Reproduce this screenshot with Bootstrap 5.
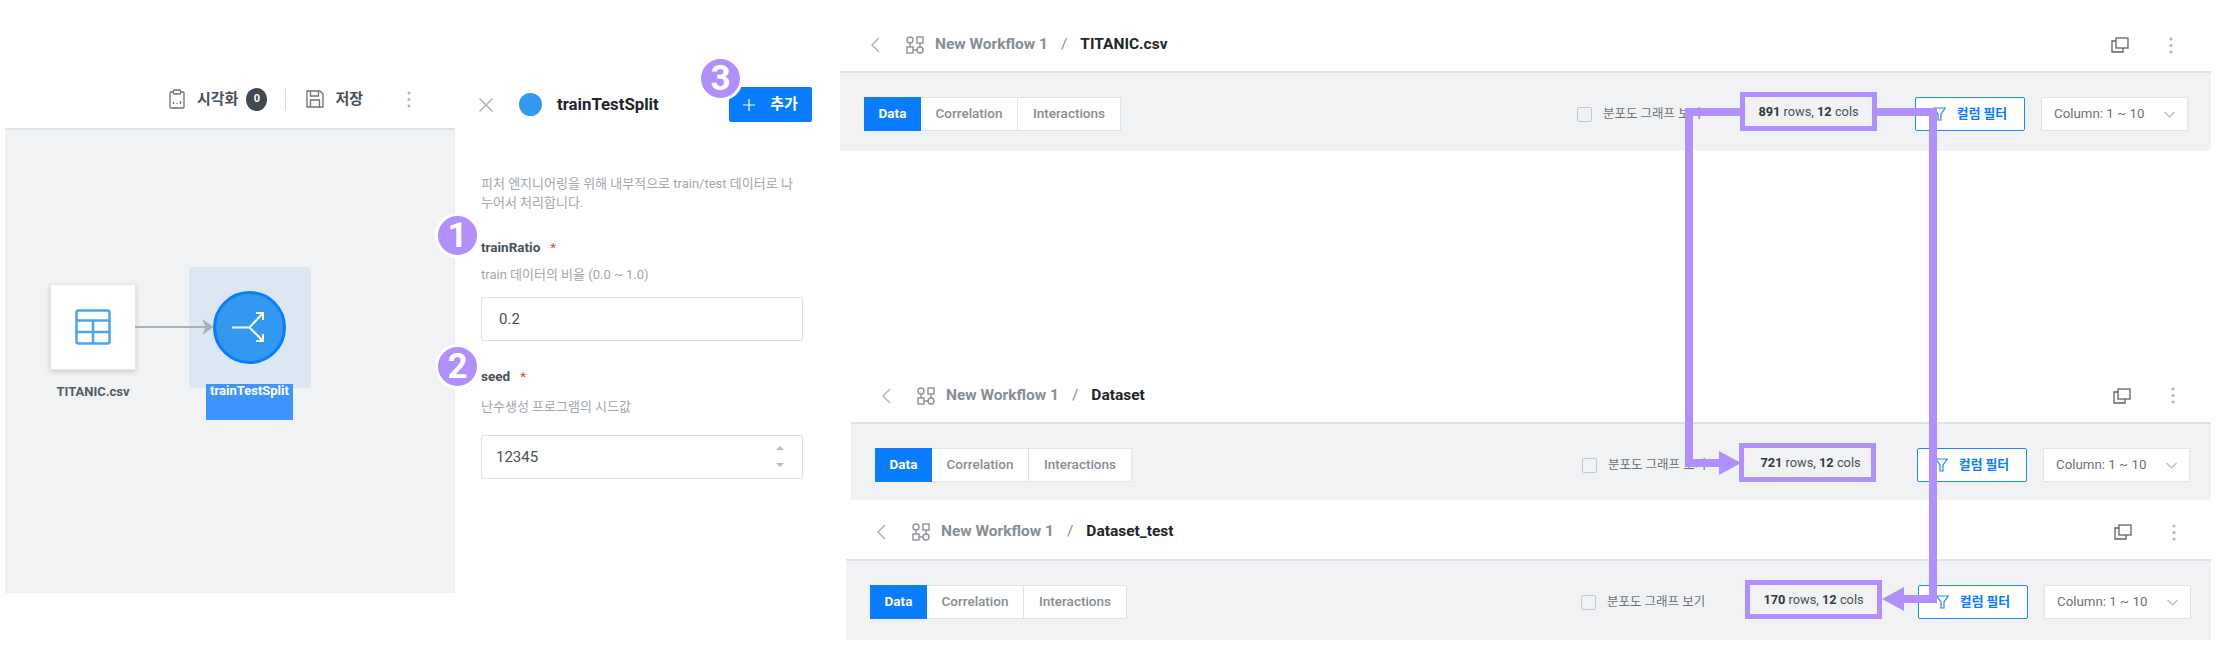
<!DOCTYPE html>
<html lang="ko">
<head>
    <meta charset="UTF-8">
    <title>trainTestSplit</title>
    <link href="https://cdn.jsdelivr.net/npm/bootstrap@5.3.0/dist/css/bootstrap.min.css" rel="stylesheet">
    <style>
        body { margin: 0; background: #fff; font-family: Roboto, "Noto Sans CJK KR", sans-serif; font-size: 12px; color: #343a40; }
        .page { width: 2223px; height: 657px; position: relative; overflow: hidden; }

        /* left: workflow canvas */
        .wf-left { width: 450px; margin-left: 5px; padding-top: 72px; flex: none; }
        .wf-tools { height: 58px; border-bottom: 2px solid #dfe2e6; padding: 0 44px 2px 0; color: #495057; font-weight: 700; font-size: 15px; }
        .wf-tools .tool-label { margin-left: 12px; }
        .wf-tools .tool-save { margin: 0 44px 0 11px; }
        .wf-tools .tool-count { width: 21px; height: 23px; border-radius: 50%; background: #414850; color: #fff; font-size: 11px; margin-left: 8px; }
        .wf-tools .tool-sep { width: 1px; height: 21px; background: #d8dce2; margin: 0 20px 0 18px; }
        .wf-canvas { height: 463px; background: #f1f2f4; border-right: 1px solid #e9ebee; position: relative; }
        .node-data { position: absolute; left: 45px; top: 154px; width: 86px; height: 86px; background: #fff; border: 1px solid #e4e6e9; box-shadow: 0 2px 5px rgba(0,0,0,.15); }
        .node-hilite { position: absolute; left: 184px; top: 137px; width: 122px; height: 121px; background: #dce7f3; border-radius: 4px; }
        .node-split { position: absolute; left: 208px; top: 161px; width: 73px; height: 73px; border-radius: 50%; background: #3398f0; border: 3px solid #0a7cff; }
        .node-link { position: absolute; left: 130px; top: 187px; }
        .node-name { position: absolute; left: 45px; top: 252px; width: 86px; text-align: center; font-weight: 700; font-size: 13px; color: #555b62; white-space: nowrap; }
        .node-name-sel { position: absolute; left: 201px; top: 254px; width: 87px; height: 36px; background: #3d94ff; color: #fff; text-align: center; font-weight: 700; font-size: 13px; line-height: 13px; white-space: nowrap; }

        /* middle: settings form */
        .side-form { width: 385px; flex: none; padding: 87px 0 0 26px; }
        .form-head { height: 35px; width: 331px; }
        .form-head .close-x { margin-left: -3px; }
        .form-head .dot-blue { width: 23px; height: 23px; border-radius: 50%; background: #3398f0; margin: 0 15px 0 25px; }
        .form-head .form-title { font-size: 16.800px; font-weight: 700; color: #212529; }
        .btn-add { width: 83px; height: 35px; background: #0a7cff; border: 0; border-radius: 2px; color: #fff; font-size: 15px; font-weight: 700; padding: 0; gap: 15px; }
        .form-desc { width: 322px; margin: 52px 0 26px; color: #a2a7ad; font-size: 13px; line-height: 19px; word-break: break-all; }
        .field-name { font-size: 13.500px; font-weight: 700; color: #495057; line-height: 18px; }
        .field-name .req { color: #f03e3e; margin-left: 10px; font-weight: 400; }
        .field-help { color: #a2a7ad; font-size: 13px; line-height: 18px; margin: 10px 0 13px; }
        .field-help-seed { margin-top: 13px; }
        .side-form .form-control { width: 322px; height: 44px; border: 1px solid #dfe2e6; border-radius: 2px; font-size: 15px; color: #495057; padding: 0 17px; }
        .side-form .seed-input { padding: 0 14px; }
        .field-gap { margin-top: 26px; }
        .seed-wrap { width: 322px; position: relative; margin-top: 19px; }
        .seed-spin { position: absolute; right: 19px; top: 9px; }

        /* right: three dataset screens */
        .panels { width: 1371px; flex: none; }
        .scr { --pr: 23px; --gap-check: 39px; --gap-filter: 38px; }
        .scr-b { --pr: 21px; --gap-check: 33px; --gap-filter: 41px; margin: 218px 0 0 11px; }
        .scr-c { --pr: 20px; --gap-check: 40px; --gap-filter: 36px; margin-left: 6px; }
        .scr-head { border-bottom: 2px solid #dfe2e6; height: 73px; padding: 19px calc(var(--pr) + 15px) 0 31px; font-size: 15.500px; font-weight: 700; }
        .scr-b .scr-head { height: 55px; padding-top: 0; }
        .scr-c .scr-head { height: 61px; padding-top: 5px; }
        .scr-head .flow-name { color: #868e96; margin: 0 13px 0 11px; }
        .scr-head .flow-icon { margin-left: 26px; }
        .scr-head .flow-sep { color: #868e96; font-weight: 400; margin-right: 13px; }
        .scr-head .flow-cur { color: #212529; }
        .scr-head .flow-more { margin-left: 40px; }
        .scr-bar { height: 78px; background: #f1f2f4; padding: 24px var(--pr) 0 24px; }
        .scr-b .scr-bar { height: 76px; }
        .scr-c .scr-bar { height: 79px; }
        .scr-tabs .btn { height: 34px; padding: 0 0 1px; border-radius: 0; font-size: 13.500px; font-weight: 500; color: #868e96; background: #fff; border: 1px solid #e1e4e8; }
        .scr-tabs .btn.active { background: #0a7cff; border-color: #0a7cff; color: #fff; font-weight: 700; }
        .tab-a { width: 57px; }
        .tab-b { width: 98px; }
        .tab-c { width: 104px; }
        .scr-check { width: 124px; height: 34px; margin-right: var(--gap-check); font-size: 12.500px; color: #6c7278; gap: 11px; white-space: nowrap; }
        .scr-check .form-check-input { width: 15px; height: 15px; margin: 0; border: 1px solid #c4c9cf; border-radius: 2px; background-color: #f1f2f4; flex: none; }
        .scr-count { width: 137px; height: 39px; margin-top: -5px; border: 5px solid #b18ffc; font-size: 12.800px; color: #495057; }
        .scr-b .scr-count { padding-left: 6px; }
        .scr-count b { font-weight: 700; color: #343a40; }
        .scr-filter { width: 110px; height: 34px; margin-left: var(--gap-filter); padding: 0; background: #fff; border: 1px solid #2185ff; border-radius: 2px; color: #0a7cff; font-size: 12.800px; font-weight: 700; gap: 11px; }
        .scr-select { width: 147px; height: 34px; margin-left: 16px; background: #fff; border: 1px solid #e1e4e8; padding: 0 12px; color: #6c7278; font-size: 13.300px; }

        /* annotations on top of everything */
        .guide-lines { position: absolute; left: 0; top: 0; pointer-events: none; }
        .step-num { position: absolute; width: 45px; height: 45px; border-radius: 50%; background: #b18ffc; border: 3px solid #fff; color: #fff; font-size: 35px; font-weight: 700; line-height: 1; }
        .step-1 { left: 435px; top: 213px; }
        .step-2 { left: 435px; top: 344px; }
        .step-3 { left: 698px; top: 56px; }
    </style>
</head>
<body>
<div class="page d-flex">

    <div class="wf-left">
        <div class="wf-tools d-flex align-items-center justify-content-end">
            <svg width="16" height="20" viewBox="0 0 16 20" fill="none" stroke="#6c7278" stroke-width="1.300"><rect x="1" y="3" width="14" height="16" rx="1"/><rect x="4.500" y="1" width="7" height="4" rx="1" fill="#fff"/><path d="M4.500 15v-2M8 15v-1M11.500 15v-3"/></svg>
            <span class="tool-label">시각화</span>
            <span class="tool-count d-flex align-items-center justify-content-center">0</span>
            <span class="tool-sep"></span>
            <svg width="18" height="18" viewBox="0 0 18 18" fill="none" stroke="#6c7278" stroke-width="1.300"><path d="M1 1h13l3 3v13H1z"/><path d="M4.500 1v5h8V1M4.500 17v-7h9v7"/></svg>
            <span class="tool-save">저장</span>
            <svg width="4" height="17" viewBox="0 0 4 17" fill="#adb5bd"><circle cx="2" cy="2" r="1.500"/><circle cx="2" cy="8.500" r="1.500"/><circle cx="2" cy="15" r="1.500"/></svg>
        </div>
        <div class="wf-canvas">
            <div class="node-hilite"></div>
            <div class="node-data d-flex align-items-center justify-content-center">
                <svg width="36" height="36" viewBox="0 0 36 36" fill="none" stroke="#4aa5f0" stroke-width="2.500"><rect x="1.500" y="1.500" width="33" height="33" rx="2"/><path d="M1.500 11.500h33M1.500 23h33M18 11.500v23"/></svg>
            </div>
            <svg class="node-link" width="85" height="22" viewBox="0 0 85 22"><path d="M0 10h72" stroke="#a8b2bd" stroke-width="2"/><path d="M68 3l10 7-10 7 3-7z" fill="#a8b2bd" stroke="#a8b2bd"/></svg>
            <div class="node-split d-flex align-items-center justify-content-center">
                <svg width="67" height="67" viewBox="3 3 67 67" fill="none" stroke="#fff" stroke-width="2"><path d="M19 36.500h17.500L50 22M36.500 36.500L50 50M43 22h7v7M43 50h7v-7"/></svg>
            </div>
            <div class="node-name">TITANIC.csv</div>
            <div class="node-name-sel">trainTestSplit</div>
        </div>
    </div>

    <div class="side-form">
        <div class="form-head d-flex align-items-center">
            <svg class="close-x" width="16" height="16" viewBox="0 0 16 16" fill="none" stroke="#adb5bd" stroke-width="1.500"><path d="M1.500 1.500l13 13M14.500 1.500l-13 13"/></svg>
            <span class="dot-blue"></span>
            <span class="form-title">trainTestSplit</span>
            <button type="button" class="btn btn-add ms-auto d-flex align-items-center justify-content-center">
                <svg width="12" height="12" viewBox="0 0 12 12" stroke="#fff" stroke-width="1.200"><path d="M6 0v12M0 6h12"/></svg>
                <span>추가</span>
            </button>
        </div>
        <p class="form-desc">피처 엔지니어링을 위해 내부적으로 train/test 데이터로 나누어서 처리합니다.</p>
        <div class="field-name">trainRatio<span class="req">*</span></div>
        <div class="field-help">train 데이터의 비율 (0.0 ~ 1.0)</div>
        <input type="text" class="form-control" value="0.2">
        <div class="field-name field-gap">seed<span class="req">*</span></div>
        <div class="field-help field-help-seed">난수생성 프로그램의 시드값</div>
        <div class="seed-wrap">
            <input type="text" class="form-control seed-input" value="12345">
            <svg class="seed-spin" width="8" height="24" viewBox="0 0 8 24" fill="#b4bac0"><path d="M0 6l4-4 4 4zM0 19h8l-4 4z"/></svg>
        </div>
    </div>

    <div class="panels">
        <section class="scr scr-a">
            <div class="scr-head d-flex align-items-center">
                <svg width="9" height="16" viewBox="0 0 9 16" fill="none" stroke="#adb5bd" stroke-width="1.500"><path d="M8 1L1 8l7 7"/></svg>
                <svg class="flow-icon" width="18" height="18" viewBox="0 0 18 18" fill="none" stroke="#8d9399" stroke-width="1.400"><circle cx="4" cy="4" r="3"/><rect x="11" y="1" width="6" height="6"/><rect x="1" y="11" width="6" height="6"/><circle cx="14" cy="14" r="3"/><path d="M4 7v4M14 7v4M7 14h4"/></svg>
                <span class="flow-name">New Workflow 1</span>
                <span class="flow-sep">/</span>
                <span class="flow-cur">TITANIC.csv</span>
                <svg class="ms-auto" width="18" height="16" viewBox="0 0 18 16" fill="none" stroke="#5c636a" stroke-width="1.300"><rect x="5" y="1" width="12" height="10"/><path d="M5 4H1v11h11v-4"/></svg>
                <svg class="flow-more" width="4" height="17" viewBox="0 0 4 17" fill="#adb5bd"><circle cx="2" cy="2" r="1.500"/><circle cx="2" cy="8.500" r="1.500"/><circle cx="2" cy="15" r="1.500"/></svg>
            </div>
            <div class="scr-bar d-flex align-items-start">
                <div class="btn-group scr-tabs">
                    <button type="button" class="btn tab-a active">Data</button>
                    <button type="button" class="btn tab-b">Correlation</button>
                    <button type="button" class="btn tab-c">Interactions</button>
                </div>
                <label class="scr-check d-flex align-items-center ms-auto"><input class="form-check-input" type="checkbox"><span>분포도 그래프 보기</span></label>
                <div class="scr-count d-flex align-items-center justify-content-center"><span><b>891</b> rows, <b>12</b> cols</span></div>
                <button type="button" class="btn scr-filter d-flex align-items-center justify-content-center">
                    <svg width="13" height="14" viewBox="0 0 13 14" fill="none" stroke="#2185ff" stroke-width="1.200"><path d="M.7 1h11.600L8 7v6H5V7z"/></svg><span>컬럼 필터</span>
                </button>
                <div class="scr-select d-flex align-items-center justify-content-between"><span>Column: 1 ~ 10</span><svg width="11" height="7" viewBox="0 0 11 7" fill="none" stroke="#b4bac0" stroke-width="1.200"><path d="M.5 1l5 5 5-5"/></svg></div>
            </div>
        </section>

        <section class="scr scr-b">
            <div class="scr-head d-flex align-items-center">
                <svg width="9" height="16" viewBox="0 0 9 16" fill="none" stroke="#adb5bd" stroke-width="1.500"><path d="M8 1L1 8l7 7"/></svg>
                <svg class="flow-icon" width="18" height="18" viewBox="0 0 18 18" fill="none" stroke="#8d9399" stroke-width="1.400"><circle cx="4" cy="4" r="3"/><rect x="11" y="1" width="6" height="6"/><rect x="1" y="11" width="6" height="6"/><circle cx="14" cy="14" r="3"/><path d="M4 7v4M14 7v4M7 14h4"/></svg>
                <span class="flow-name">New Workflow 1</span>
                <span class="flow-sep">/</span>
                <span class="flow-cur">Dataset</span>
                <svg class="ms-auto" width="18" height="16" viewBox="0 0 18 16" fill="none" stroke="#5c636a" stroke-width="1.300"><rect x="5" y="1" width="12" height="10"/><path d="M5 4H1v11h11v-4"/></svg>
                <svg class="flow-more" width="4" height="17" viewBox="0 0 4 17" fill="#adb5bd"><circle cx="2" cy="2" r="1.500"/><circle cx="2" cy="8.500" r="1.500"/><circle cx="2" cy="15" r="1.500"/></svg>
            </div>
            <div class="scr-bar d-flex align-items-start">
                <div class="btn-group scr-tabs">
                    <button type="button" class="btn tab-a active">Data</button>
                    <button type="button" class="btn tab-b">Correlation</button>
                    <button type="button" class="btn tab-c">Interactions</button>
                </div>
                <label class="scr-check d-flex align-items-center ms-auto"><input class="form-check-input" type="checkbox"><span>분포도 그래프 보기</span></label>
                <div class="scr-count d-flex align-items-center justify-content-center"><span><b>721</b> rows, <b>12</b> cols</span></div>
                <button type="button" class="btn scr-filter d-flex align-items-center justify-content-center">
                    <svg width="13" height="14" viewBox="0 0 13 14" fill="none" stroke="#2185ff" stroke-width="1.200"><path d="M.7 1h11.600L8 7v6H5V7z"/></svg><span>컬럼 필터</span>
                </button>
                <div class="scr-select d-flex align-items-center justify-content-between"><span>Column: 1 ~ 10</span><svg width="11" height="7" viewBox="0 0 11 7" fill="none" stroke="#b4bac0" stroke-width="1.200"><path d="M.5 1l5 5 5-5"/></svg></div>
            </div>
        </section>

        <section class="scr scr-c">
            <div class="scr-head d-flex align-items-center">
                <svg width="9" height="16" viewBox="0 0 9 16" fill="none" stroke="#adb5bd" stroke-width="1.500"><path d="M8 1L1 8l7 7"/></svg>
                <svg class="flow-icon" width="18" height="18" viewBox="0 0 18 18" fill="none" stroke="#8d9399" stroke-width="1.400"><circle cx="4" cy="4" r="3"/><rect x="11" y="1" width="6" height="6"/><rect x="1" y="11" width="6" height="6"/><circle cx="14" cy="14" r="3"/><path d="M4 7v4M14 7v4M7 14h4"/></svg>
                <span class="flow-name">New Workflow 1</span>
                <span class="flow-sep">/</span>
                <span class="flow-cur">Dataset_test</span>
                <svg class="ms-auto" width="18" height="16" viewBox="0 0 18 16" fill="none" stroke="#5c636a" stroke-width="1.300"><rect x="5" y="1" width="12" height="10"/><path d="M5 4H1v11h11v-4"/></svg>
                <svg class="flow-more" width="4" height="17" viewBox="0 0 4 17" fill="#adb5bd"><circle cx="2" cy="2" r="1.500"/><circle cx="2" cy="8.500" r="1.500"/><circle cx="2" cy="15" r="1.500"/></svg>
            </div>
            <div class="scr-bar d-flex align-items-start">
                <div class="btn-group scr-tabs">
                    <button type="button" class="btn tab-a active">Data</button>
                    <button type="button" class="btn tab-b">Correlation</button>
                    <button type="button" class="btn tab-c">Interactions</button>
                </div>
                <label class="scr-check d-flex align-items-center ms-auto"><input class="form-check-input" type="checkbox"><span>분포도 그래프 보기</span></label>
                <div class="scr-count d-flex align-items-center justify-content-center"><span><b>170</b> rows, <b>12</b> cols</span></div>
                <button type="button" class="btn scr-filter d-flex align-items-center justify-content-center">
                    <svg width="13" height="14" viewBox="0 0 13 14" fill="none" stroke="#2185ff" stroke-width="1.200"><path d="M.7 1h11.600L8 7v6H5V7z"/></svg><span>컬럼 필터</span>
                </button>
                <div class="scr-select d-flex align-items-center justify-content-between"><span>Column: 1 ~ 10</span><svg width="11" height="7" viewBox="0 0 11 7" fill="none" stroke="#b4bac0" stroke-width="1.200"><path d="M.5 1l5 5 5-5"/></svg></div>
            </div>
        </section>
    </div>

    <!-- callouts drawn over the screens -->
    <svg class="guide-lines" width="2223" height="657" viewBox="0 0 2223 657">
        <g fill="none" stroke="#b18ffc" stroke-width="8">
            <path d="M1740 112H1689V463H1722"/>
            <path d="M1877 112H1933V599H1902"/>
        </g>
        <path d="M1719 451l22 12-22 12zM1904 587l-22 12 22 12z" fill="#b18ffc"/>
    </svg>
    <span class="step-num step-1 d-flex align-items-center justify-content-center">1</span>
    <span class="step-num step-2 d-flex align-items-center justify-content-center">2</span>
    <span class="step-num step-3 d-flex align-items-center justify-content-center">3</span>
</div>
<script src="https://cdn.jsdelivr.net/npm/bootstrap@5.3.0/dist/js/bootstrap.bundle.min.js"></script>
</body>
</html>
